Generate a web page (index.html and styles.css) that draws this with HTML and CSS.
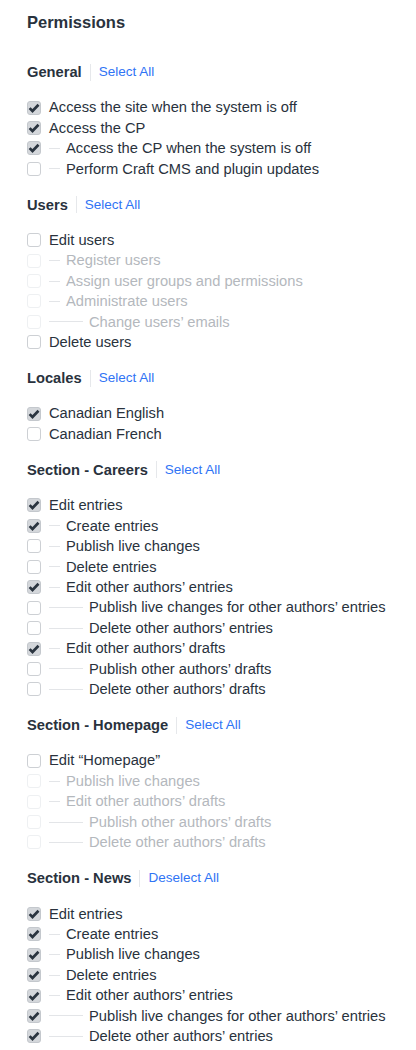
FILE: index.html
```html
<!DOCTYPE html>
<html lang="en">
<head>
  <meta charset="UTF-8">
  <meta name="viewport" content="width=device-width, initial-scale=1.0">
  <title>Permissions</title>
  <link rel="stylesheet" href="styles.css">
</head>
<body>
  <div class="permissions">
    <h2>Permissions</h2>

    <div class="group">
      <h3>General <span class="sep"></span><a href="#" class="select-all">Select All</a></h3>
      <div class="row"><span class="cb on"><svg viewBox="0 0 14 14"><path d="M2.6 7.1l2.9 2.9 6-6.2"/></svg></span>Access the site when the system is off</div>
      <div class="row"><span class="cb on"><svg viewBox="0 0 14 14"><path d="M2.6 7.1l2.9 2.9 6-6.2"/></svg></span>Access the CP</div>
      <div class="row"><span class="cb on"><svg viewBox="0 0 14 14"><path d="M2.6 7.1l2.9 2.9 6-6.2"/></svg></span><span class="line l1"></span>Access the CP when the system is off</div>
      <div class="row"><span class="cb"></span><span class="line l1"></span>Perform Craft CMS and plugin updates</div>
    </div>

    <div class="group">
      <h3>Users <span class="sep"></span><a href="#" class="select-all">Select All</a></h3>
      <div class="row"><span class="cb"></span>Edit users</div>
      <div class="row off"><span class="cb"></span><span class="line l1"></span>Register users</div>
      <div class="row off"><span class="cb"></span><span class="line l1"></span>Assign user groups and permissions</div>
      <div class="row off"><span class="cb"></span><span class="line l1"></span>Administrate users</div>
      <div class="row off"><span class="cb"></span><span class="line l2"></span>Change users’ emails</div>
      <div class="row"><span class="cb"></span>Delete users</div>
    </div>

    <div class="group">
      <h3>Locales <span class="sep"></span><a href="#" class="select-all">Select All</a></h3>
      <div class="row"><span class="cb on"><svg viewBox="0 0 14 14"><path d="M2.6 7.1l2.9 2.9 6-6.2"/></svg></span>Canadian English</div>
      <div class="row"><span class="cb"></span>Canadian French</div>
    </div>

    <div class="group">
      <h3>Section - Careers <span class="sep"></span><a href="#" class="select-all">Select All</a></h3>
      <div class="row"><span class="cb on"><svg viewBox="0 0 14 14"><path d="M2.6 7.1l2.9 2.9 6-6.2"/></svg></span>Edit entries</div>
      <div class="row"><span class="cb on"><svg viewBox="0 0 14 14"><path d="M2.6 7.1l2.9 2.9 6-6.2"/></svg></span><span class="line l1"></span>Create entries</div>
      <div class="row"><span class="cb"></span><span class="line l1"></span>Publish live changes</div>
      <div class="row"><span class="cb"></span><span class="line l1"></span>Delete entries</div>
      <div class="row"><span class="cb on"><svg viewBox="0 0 14 14"><path d="M2.6 7.1l2.9 2.9 6-6.2"/></svg></span><span class="line l1"></span>Edit other authors’ entries</div>
      <div class="row"><span class="cb"></span><span class="line l2"></span>Publish live changes for other authors’ entries</div>
      <div class="row"><span class="cb"></span><span class="line l2"></span>Delete other authors’ entries</div>
      <div class="row"><span class="cb on"><svg viewBox="0 0 14 14"><path d="M2.6 7.1l2.9 2.9 6-6.2"/></svg></span><span class="line l1"></span>Edit other authors’ drafts</div>
      <div class="row"><span class="cb"></span><span class="line l2"></span>Publish other authors’ drafts</div>
      <div class="row"><span class="cb"></span><span class="line l2"></span>Delete other authors’ drafts</div>
    </div>

    <div class="group">
      <h3>Section - Homepage <span class="sep"></span><a href="#" class="select-all">Select All</a></h3>
      <div class="row"><span class="cb"></span>Edit “Homepage”</div>
      <div class="row off"><span class="cb"></span><span class="line l1"></span>Publish live changes</div>
      <div class="row off"><span class="cb"></span><span class="line l1"></span>Edit other authors’ drafts</div>
      <div class="row off"><span class="cb"></span><span class="line l2"></span>Publish other authors’ drafts</div>
      <div class="row off"><span class="cb"></span><span class="line l2"></span>Delete other authors’ drafts</div>
    </div>

    <div class="group">
      <h3>Section - News <span class="sep"></span><a href="#" class="select-all">Deselect All</a></h3>
      <div class="row"><span class="cb on"><svg viewBox="0 0 14 14"><path d="M2.6 7.1l2.9 2.9 6-6.2"/></svg></span>Edit entries</div>
      <div class="row"><span class="cb on"><svg viewBox="0 0 14 14"><path d="M2.6 7.1l2.9 2.9 6-6.2"/></svg></span><span class="line l1"></span>Create entries</div>
      <div class="row"><span class="cb on"><svg viewBox="0 0 14 14"><path d="M2.6 7.1l2.9 2.9 6-6.2"/></svg></span><span class="line l1"></span>Publish live changes</div>
      <div class="row"><span class="cb on"><svg viewBox="0 0 14 14"><path d="M2.6 7.1l2.9 2.9 6-6.2"/></svg></span><span class="line l1"></span>Delete entries</div>
      <div class="row"><span class="cb on"><svg viewBox="0 0 14 14"><path d="M2.6 7.1l2.9 2.9 6-6.2"/></svg></span><span class="line l1"></span>Edit other authors’ entries</div>
      <div class="row"><span class="cb on"><svg viewBox="0 0 14 14"><path d="M2.6 7.1l2.9 2.9 6-6.2"/></svg></span><span class="line l2"></span>Publish live changes for other authors’ entries</div>
      <div class="row"><span class="cb on"><svg viewBox="0 0 14 14"><path d="M2.6 7.1l2.9 2.9 6-6.2"/></svg></span><span class="line l2"></span>Delete other authors’ entries</div>
    </div>
  </div>
</body>
</html>
```

FILE: styles.css
```css
/* Global Styles */
* {
  margin: 0;
  padding: 0;
  box-sizing: border-box;
  font-family: "Liberation Sans", Arial, sans-serif;
}

body {
  background: #fff;
  color: #29323d;
  font-size: 14.7px;
}

.permissions {
  padding: 12px 27px 0;
}

h2 {
  font-size: 16.5px;
  line-height: 20px;
  font-weight: bold;
  margin-bottom: 30px;
}

.group {
  margin-bottom: 15.6px;
}

h3 {
  display: flex;
  align-items: center;
  font-size: 14.7px;
  line-height: 20px;
  font-weight: bold;
  margin-bottom: 15.3px;
}

.sep {
  display: inline-block;
  width: 1px;
  height: 17px;
  background: #e6e8eb;
  margin: 0 8px;
}

.select-all {
  color: #2f74f5;
  font-weight: normal;
  font-size: 13.5px;
  text-decoration: none;
}

.row {
  display: flex;
  align-items: center;
  height: 20.45px;
  line-height: 20.45px;
  white-space: nowrap;
}

.row.off {
  color: #b4b8bd;
}

/* Checkboxes */
.cb {
  flex: none;
  width: 14px;
  height: 14px;
  margin-right: 8px;
  border: 1px solid #cdd0d4;
  border-radius: 3px;
  background: #fff;
  display: flex;
  align-items: center;
  justify-content: center;
}

.cb.on {
  background: #d4d7db;
  border-color: #c4c8cd;
}

.cb svg {
  width: 14px;
  height: 14px;
  flex: none;
  fill: none;
  stroke: #2b3540;
  stroke-width: 2.7;
}

.row.off .cb {
  border-color: #eef0f2;
}

/* Tree lines */
.line {
  flex: none;
  height: 1px;
  background: #e3e5e8;
  margin-right: 6px;
}

.l1 {
  width: 11px;
}

.l2 {
  width: 34px;
}
```
